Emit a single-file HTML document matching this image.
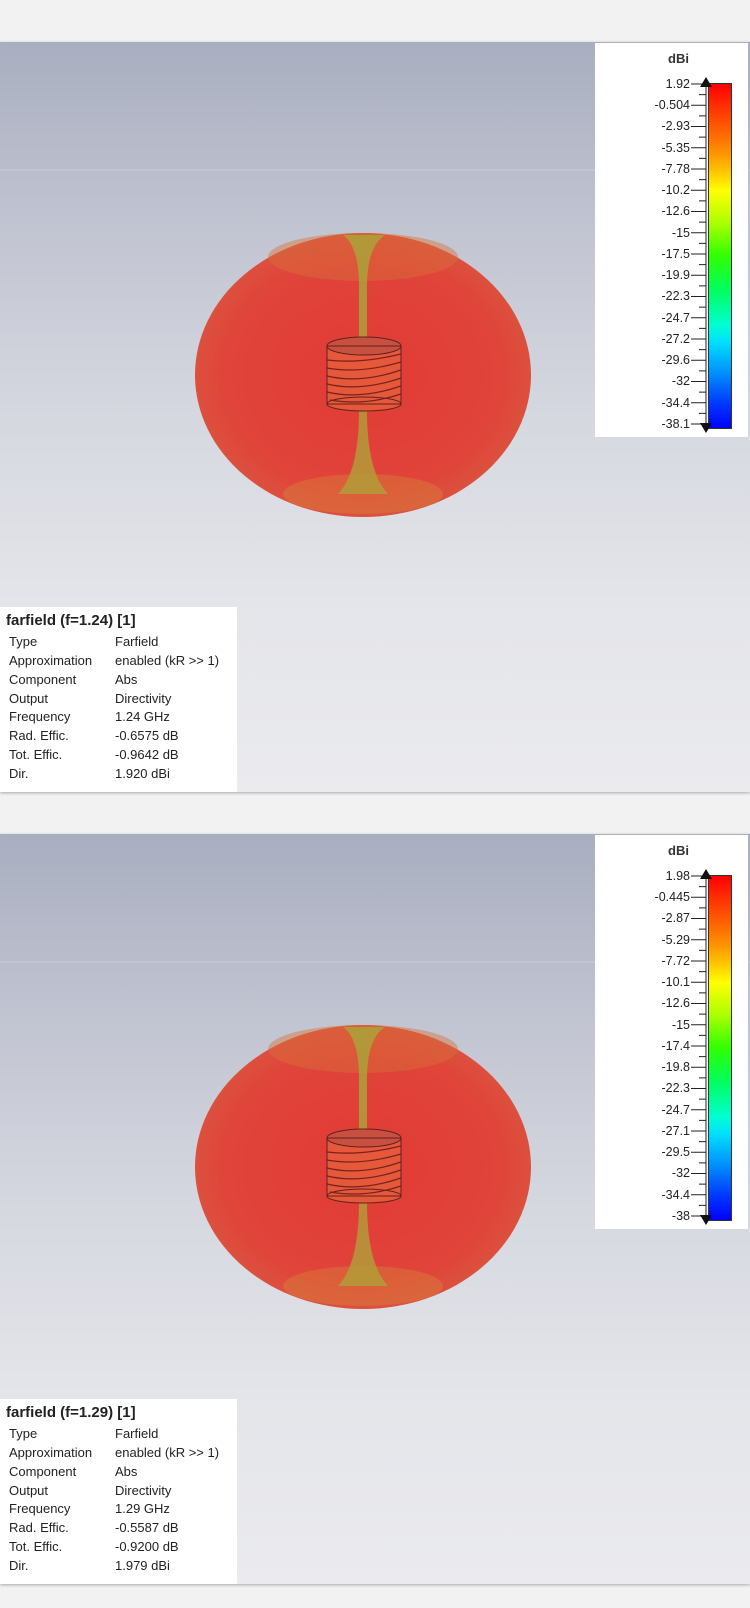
<!DOCTYPE html>
<html><head><meta charset="utf-8"><style>
body{margin:0;width:750px;height:1608px;background:#f2f2f2;position:relative;overflow:hidden;font-family:"Liberation Sans",sans-serif}
.p{position:absolute;left:0;width:750px;height:750px;background:linear-gradient(#a9aec0 0%,#c4c7d3 28%,#d6d8e0 50%,#e4e5ea 75%,#ebebee 100%);box-shadow:0 1px 3px rgba(0,0,0,.3)}
.lg{position:absolute;left:595px;top:1px;width:153px;height:394px;background:#fff}
.lg .t{position:absolute;top:8px;left:0;width:153px;text-align:center;font-weight:bold;font-size:13px;color:#333;padding-left:14px;box-sizing:border-box}
.lab{position:absolute;right:58px;font-size:12.5px;color:#222;line-height:14px;white-space:nowrap}
.bar{position:absolute;left:113px;top:40px;width:24px;height:346px;border:1px solid #333;box-sizing:border-box;
background:linear-gradient(#ff0000 0%,#ff3a00 8%,#ff7a00 17%,#ffc000 25%,#ffff00 31%,#b0ff00 40%,#30ff00 50%,#00ff60 60%,#00ffd0 70%,#00e0ff 75%,#0090ff 84%,#0040ff 92%,#0000ff 100%)}
.info{position:absolute;left:0;top:565px;width:237px;height:185px;background:#fff;font-size:13px;color:#222;white-space:nowrap}
.info .h{position:absolute;left:6px;top:5px;font-weight:bold;font-size:15px}
.info .r{position:absolute;left:9px;height:18px;width:228px}
.info .v{position:absolute;left:106px;top:0}
</style></head><body>

<svg width="0" height="0" style="position:absolute"><defs>
<radialGradient id="g1" cx="50%" cy="50%" r="55%"><stop offset="0" stop-color="#e23a35"/><stop offset=".75" stop-color="#e0443a"/><stop offset="1" stop-color="#d9573f"/></radialGradient>
<g id="ticks" stroke="#222" stroke-width="1">
<line x1="111" y1="38" x2="111" y2="386"/>
<path d="M96 41H111M104 51.6H111M96 62.2H111M104 72.9H111M96 83.5H111M104 94.1H111M96 104.7H111M104 115.4H111M96 126H111M104 136.6H111M96 147.2H111M104 157.9H111M96 168.5H111M104 179.1H111M96 189.7H111M104 200.4H111M96 211H111M104 221.6H111M96 232.2H111M104 242.9H111M96 253.5H111M104 264.1H111M96 274.7H111M104 285.4H111M96 296H111M104 306.6H111M96 317.2H111M104 327.9H111M96 338.5H111M104 349.1H111M96 359.7H111M104 370.4H111M96 381H111"/>
</g>
<g id="body">
<line x1="0" y1="128" x2="750" y2="128" stroke="#c8ccd6" stroke-width="1"/>
<ellipse cx="363" cy="333" rx="168" ry="142" fill="url(#g1)"/>
<ellipse cx="363" cy="215" rx="95" ry="24" fill="#d8703a" opacity=".45"/>
<ellipse cx="363" cy="452" rx="80" ry="20" fill="#d8803a" opacity=".45"/>
<path d="M343 193 Q360 205 359 250 L359 298 L367 298 L367 250 Q366 205 385 193 Z" fill="#a8a838" opacity=".8"/>
<path d="M359 368 L367 368 Q367 430 388 452 L338 452 Q359 430 359 368 Z" fill="#b0a038" opacity=".8"/>
<rect x="327" y="304" width="74" height="58" fill="#e5583a"/>
<ellipse cx="364" cy="304" rx="37" ry="9" fill="#c85040" stroke="#602020"/>
<ellipse cx="364" cy="362" rx="37" ry="7" fill="#e5583a" stroke="#602020"/>
<g stroke="#7a2020" stroke-width="1.2" fill="none">
<path d="M327 318 Q360 322 401 312"/><path d="M327 326 Q360 332 401 320"/><path d="M327 334 Q360 342 401 328"/><path d="M327 342 Q360 350 401 336"/><path d="M327 350 Q360 358 401 344"/><path d="M330 358 Q365 364 401 352"/>
</g>
<rect x="327" y="304" width="74" height="58" fill="none" stroke="#602020"/>
</g>
</defs></svg>

<div class="p" style="top:42px">
<svg width="750" height="750" style="position:absolute;left:0;top:0"><use href="#body"/></svg>
<div class="lg"><div class="t">dBi</div>
<div class="bar"></div>
<svg width="153" height="394" style="position:absolute;left:0;top:0"><use href="#ticks"/>
<polygon points="111,34 105,44 117,44" fill="#111"/><polygon points="111,390 105,380 117,380" fill="#111"/></svg>
<div class="lab" style="top:34px">1.92</div><div class="lab" style="top:55px">-0.504</div><div class="lab" style="top:76px">-2.93</div><div class="lab" style="top:98px">-5.35</div><div class="lab" style="top:119px">-7.78</div><div class="lab" style="top:140px">-10.2</div><div class="lab" style="top:161px">-12.6</div><div class="lab" style="top:183px">-15</div><div class="lab" style="top:204px">-17.5</div><div class="lab" style="top:225px">-19.9</div><div class="lab" style="top:246px">-22.3</div><div class="lab" style="top:268px">-24.7</div><div class="lab" style="top:289px">-27.2</div><div class="lab" style="top:310px">-29.6</div><div class="lab" style="top:331px">-32</div><div class="lab" style="top:353px">-34.4</div><div class="lab" style="top:374px">-38.1</div>
</div>
<div class="info"><div class="h">farfield (f=1.24) [1]</div>
<div class="r" style="top:27px">Type<span class="v">Farfield</span></div>
<div class="r" style="top:46px">Approximation<span class="v">enabled (kR &gt;&gt; 1)</span></div>
<div class="r" style="top:65px">Component<span class="v">Abs</span></div>
<div class="r" style="top:84px">Output<span class="v">Directivity</span></div>
<div class="r" style="top:102px">Frequency<span class="v">1.24 GHz</span></div>
<div class="r" style="top:121px">Rad. Effic.<span class="v">-0.6575 dB</span></div>
<div class="r" style="top:140px">Tot. Effic.<span class="v">-0.9642 dB</span></div>
<div class="r" style="top:159px">Dir.<span class="v">1.920 dBi</span></div>
</div>
</div>

<div class="p" style="top:834px">
<svg width="750" height="750" style="position:absolute;left:0;top:0"><use href="#body"/></svg>
<div class="lg"><div class="t">dBi</div>
<div class="bar"></div>
<svg width="153" height="394" style="position:absolute;left:0;top:0"><use href="#ticks"/>
<polygon points="111,34 105,44 117,44" fill="#111"/><polygon points="111,390 105,380 117,380" fill="#111"/></svg>
<div class="lab" style="top:34px">1.98</div><div class="lab" style="top:55px">-0.445</div><div class="lab" style="top:76px">-2.87</div><div class="lab" style="top:98px">-5.29</div><div class="lab" style="top:119px">-7.72</div><div class="lab" style="top:140px">-10.1</div><div class="lab" style="top:161px">-12.6</div><div class="lab" style="top:183px">-15</div><div class="lab" style="top:204px">-17.4</div><div class="lab" style="top:225px">-19.8</div><div class="lab" style="top:246px">-22.3</div><div class="lab" style="top:268px">-24.7</div><div class="lab" style="top:289px">-27.1</div><div class="lab" style="top:310px">-29.5</div><div class="lab" style="top:331px">-32</div><div class="lab" style="top:353px">-34.4</div><div class="lab" style="top:374px">-38</div>
</div>
<div class="info"><div class="h">farfield (f=1.29) [1]</div>
<div class="r" style="top:27px">Type<span class="v">Farfield</span></div>
<div class="r" style="top:46px">Approximation<span class="v">enabled (kR &gt;&gt; 1)</span></div>
<div class="r" style="top:65px">Component<span class="v">Abs</span></div>
<div class="r" style="top:84px">Output<span class="v">Directivity</span></div>
<div class="r" style="top:102px">Frequency<span class="v">1.29 GHz</span></div>
<div class="r" style="top:121px">Rad. Effic.<span class="v">-0.5587 dB</span></div>
<div class="r" style="top:140px">Tot. Effic.<span class="v">-0.9200 dB</span></div>
<div class="r" style="top:159px">Dir.<span class="v">1.979 dBi</span></div>
</div>
</div>
</body></html>
